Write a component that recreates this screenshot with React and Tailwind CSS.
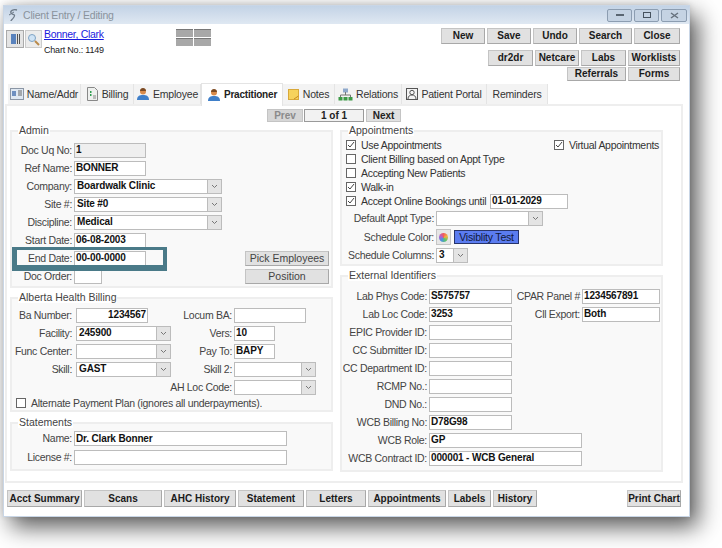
import { Fragment } from 'react';

const btn = 'flex items-center justify-center border border-[#c4c4c4] border-b-[#a8a8a8] border-r-[#a8a8a8] bg-[#e1e1e1] font-bold text-[#1a1a1a] text-[10px] leading-none whitespace-nowrap';

function Btn({ w, h = 'h-[16px]', children }) {
  return <div className={`${btn} ${w} ${h}`}>{children}</div>;
}

function Input({ w, value, right, gray }) {
  return (
    <div
      className={`${w} h-[15px] shrink-0 border border-[#bcbcbc] flex items-center px-[1px] font-bold text-[10px] tracking-[-0.15px] leading-none text-[#111] whitespace-nowrap overflow-hidden ${gray ? 'bg-[#efefef]' : 'bg-white'} ${right ? 'justify-end' : ''}`}
    >
      {value}
    </div>
  );
}

function Combo({ w, value }) {
  return (
    <div className={`${w} h-[15px] shrink-0 border border-[#bcbcbc] bg-white flex items-center font-bold text-[10px] tracking-[-0.15px] leading-none text-[#111]`}>
      <span className="flex-1 pl-[2px] whitespace-nowrap overflow-hidden">{value}</span>
      <span className="w-[14px] h-full bg-[#e4e4e4] border-l border-[#bcbcbc] flex items-center justify-center">
        <svg width="7" height="5" viewBox="0 0 7 5" fill="none">
          <path d="M1 1l2.500 2.500L6 1" stroke="#777" strokeWidth="1" />
        </svg>
      </span>
    </div>
  );
}

function Label({ w, children }) {
  return <span className={`${w} shrink-0 text-right text-[#444] text-[10.500px] tracking-[-0.3px] leading-none whitespace-nowrap`}>{children}</span>;
}

function Box({ title, className, children }) {
  return (
    <div className={`relative border-2 border-[#eeeeee] bg-[#f9f9f9] ${className}`}>
      <span className="absolute left-[6px] top-[-8px] bg-white px-[1px] text-[10.500px] leading-[12px] text-[#444]">{title}</span>
      {children}
    </div>
  );
}

function Check({ checked }) {
  return (
    <span className="w-[10px] h-[10px] shrink-0 border border-[#666] bg-white flex items-center justify-center">
      {checked && (
        <svg width="8" height="8" viewBox="0 0 8 8" fill="none">
          <path d="M1 4l2 2 4-5" stroke="#444" strokeWidth="1" />
        </svg>
      )}
    </span>
  );
}

function PersonIcon() {
  return (
    <svg width="14" height="14" viewBox="0 0 14 14">
      <path d="M1 13c0-4 2.500-5 6-5s6 1 6 5z" fill="#3f7fc9" />
      <circle cx="7" cy="4.500" r="3" fill="#d98b4a" />
      <path d="M4 4c0-2 1.500-3 3-3s3 1 3 3z" fill="#7a4a24" />
    </svg>
  );
}

const tabs = [
  {
    label: 'Name/Addr',
    w: 'w-[73px]',
    icon: (
      <svg width="14" height="12" viewBox="0 0 14 12">
        <rect x="0.500" y="0.500" width="13" height="11" fill="#dfe8f2" stroke="#8b96a5" />
        <rect x="2" y="3" width="4" height="5" fill="#6d8fc0" />
        <path d="M8 3h4M8 5h4M8 7h4" stroke="#666" />
      </svg>
    ),
  },
  {
    label: 'Billing',
    w: 'w-[53px]',
    icon: (
      <svg width="13" height="14" viewBox="0 0 13 14">
        <path d="M1.500.5h7l3 3v10h-10z" fill="#eef0ee" stroke="#888" />
        <path d="M4 5h1.500M4 8h1.500" stroke="#2e9e4f" strokeWidth="2" />
        <path d="M7 9h3M7 11h3" stroke="#888" />
      </svg>
    ),
  },
  { label: 'Employee', w: 'w-[67px]', icon: <PersonIcon /> },
  { label: 'Practitioner', w: 'w-[82px]', icon: <PersonIcon />, active: true },
  {
    label: 'Notes',
    w: 'w-[52px]',
    icon: (
      <svg width="12" height="12" viewBox="0 0 12 12">
        <rect x="0.500" y="1.500" width="10" height="10" fill="#f6d25c" stroke="#d9a93a" />
        <path d="M6 11l4.500-3" stroke="#c98a20" />
      </svg>
    ),
  },
  {
    label: 'Relations',
    w: 'w-[67px]',
    icon: (
      <svg width="15" height="13" viewBox="0 0 15 13">
        <rect x="5" y="0.500" width="5" height="4" fill="#8fa9cc" />
        <path d="M7.500 4v3M2.500 9V7h10v2" stroke="#777" fill="none" />
        <rect x="0.500" y="9" width="4" height="3.500" fill="#3d9a47" />
        <rect x="5.500" y="9" width="4" height="3.500" fill="#3d9a47" />
        <rect x="10.500" y="9" width="4" height="3.500" fill="#3d9a47" />
      </svg>
    ),
  },
  {
    label: 'Patient Portal',
    w: 'w-[85px]',
    icon: (
      <svg width="12" height="12" viewBox="0 0 12 12" fill="none" stroke="#555">
        <rect x="0.500" y="0.500" width="11" height="11" />
        <circle cx="6" cy="4.500" r="2.200" />
        <path d="M2 11c0-3 2-4 4-4s4 1 4 4" />
      </svg>
    ),
  },
  { label: 'Reminders', w: 'w-[61px]' },
];

const adminRows = [
  ['Doc Uq No:', <Input key="a" w="w-[72px]" value="1" gray />],
  ['Ref Name:', <Input key="a" w="w-[72px]" value="BONNER" />],
  ['Company:', <Combo key="a" w="w-[148px]" value="Boardwalk Clinic" />],
  ['Site #:', <Combo key="a" w="w-[148px]" value="Site #0" />],
  ['Discipline:', <Combo key="a" w="w-[148px]" value="Medical" />],
  ['Start Date:', <Input key="a" w="w-[72px]" value="06-08-2003" />],
];

const externalRows = [
  ['Lab Phys Code:', 'S575757', 'w-[83px]', 'CPAR Panel #', '1234567891'],
  ['Lab Loc Code:', '3253', 'w-[83px]', 'Cll Export:', 'Both'],
  ['EPIC Provider ID:', '', 'w-[83px]'],
  ['CC Submitter ID:', '', 'w-[83px]'],
  ['CC Department ID:', '', 'w-[83px]'],
  ['RCMP No.:', '', 'w-[83px]'],
  ['DND No.:', '', 'w-[83px]'],
  ['WCB Billing No:', 'D78G98', 'w-[83px]'],
  ['WCB Role:', 'GP', 'w-[153px]'],
  ['WCB Contract ID:', '000001 - WCB General', 'w-[153px]'],
];

const bottomButtons = [
  ['Acct Summary', 'w-[75px]'],
  ['Scans', 'w-[78px]'],
  ['AHC History', 'w-[72px]'],
  ['Statement', 'w-[66px]'],
  ['Letters', 'w-[60px]'],
  ['Appointments', 'w-[78px]'],
  ['Labels', 'w-[43px]'],
  ['History', 'w-[44px]'],
];

function AdminBox() {
  return (
    <Box title="Admin" className="h-[158px] pt-[9px]">
      {adminRows.map(([label, field]) => (
        <div key={label} className="flex items-center gap-[2px] h-[18px]">
          <Label w="w-[60px]">{label}</Label>
          {field}
        </div>
      ))}
      <div className="flex items-center gap-[2px] h-[18px]">
        <Label w="w-[60px]">End Date:</Label>
        <Input w="w-[72px]" value="00-00-0000" />
        <div className="ml-auto mr-[2px]">
          <Btn w="w-[84px]" h="h-[15px]"><span className="font-normal text-[10.500px] text-[#444]">Pick Employees</span></Btn>
        </div>
      </div>
      <div className="flex items-center gap-[2px] h-[18px]">
        <Label w="w-[60px]">Doc Order:</Label>
        <Input w="w-[28px]" value="" />
        <div className="ml-auto mr-[2px]">
          <Btn w="w-[84px]" h="h-[15px]"><span className="font-normal text-[10.500px] text-[#444]">Position</span></Btn>
        </div>
      </div>
      <div className="absolute left-[0px] top-[115px] w-[155px] h-[24px] border-[#4a7a88] border-t-[3px] border-l-[5px] border-r-[4px] border-b-[6px]" />
    </Box>
  );
}

function BillingBox() {
  return (
    <Box title="Alberta Health Billing" className="h-[115px] pt-[7px]">
      <div className="flex items-center h-[18px]">
        <div className="w-[158px] shrink-0 flex items-center gap-[4px]">
          <Label w="w-[60px]">Ba Number:</Label>
          <Input w="w-[72px]" value="1234567" right />
        </div>
        <Label w="w-[62px]">Locum BA:</Label>
        <span className="w-[2px]" />
        <Input w="w-[72px]" value="" />
      </div>
      <div className="flex items-center h-[18px]">
        <div className="w-[158px] shrink-0 flex items-center gap-[4px]">
          <Label w="w-[60px]">Facility:</Label>
          <Combo w="w-[95px]" value="245900" />
        </div>
        <Label w="w-[62px]">Vers:</Label>
        <span className="w-[2px]" />
        <Input w="w-[41px]" value="10" />
      </div>
      <div className="flex items-center h-[18px]">
        <div className="w-[158px] shrink-0 flex items-center gap-[4px]">
          <Label w="w-[60px]">Func Center:</Label>
          <Combo w="w-[95px]" value="" />
        </div>
        <Label w="w-[62px]">Pay To:</Label>
        <span className="w-[2px]" />
        <Input w="w-[41px]" value="BAPY" />
      </div>
      <div className="flex items-center h-[18px]">
        <div className="w-[158px] shrink-0 flex items-center gap-[4px]">
          <Label w="w-[60px]">Skill:</Label>
          <Combo w="w-[95px]" value="GAST" />
        </div>
        <Label w="w-[62px]">Skill 2:</Label>
        <span className="w-[2px]" />
        <Combo w="w-[82px]" value="" />
      </div>
      <div className="flex items-center h-[18px]">
        <div className="w-[158px] shrink-0" />
        <Label w="w-[62px]">AH Loc Code:</Label>
        <span className="w-[2px]" />
        <Combo w="w-[82px]" value="" />
      </div>
      <div className="flex items-center h-[14px] pl-[4px] gap-[5px] text-[10.500px] tracking-[-0.3px] leading-none text-[#444]">
        <Check />
        <span>Alternate Payment Plan (ignores all underpayments).</span>
      </div>
    </Box>
  );
}

function StatementsBox() {
  return (
    <Box title="Statements" className="h-[49px] pt-[5px]">
      <div className="flex items-center gap-[2px] h-[19px]">
        <Label w="w-[60px]">Name:</Label>
        <Input w="w-[213px]" value="Dr. Clark Bonner" />
      </div>
      <div className="flex items-center gap-[2px] h-[19px]">
        <Label w="w-[60px]">License #:</Label>
        <Input w="w-[213px]" value="" />
      </div>
    </Box>
  );
}

function AppointmentsBox() {
  const row = 'flex items-center h-[14px] pl-[4px] gap-[5px] text-[10.500px] tracking-[-0.3px] leading-none text-[#333]';
  return (
    <Box title="Appointments" className="h-[136px] pt-[6px]">
      <div className={row}>
        <Check checked />
        <span>Use Appointments</span>
        <span className="ml-auto mr-[2px] flex items-center gap-[5px]">
          <Check checked />
          <span>Virtual Appointments</span>
        </span>
      </div>
      {['Client Billing based on Appt Type', 'Accepting New Patients', 'Walk-in'].map((label, i) => (
        <div key={label} className={row}>
          <Check checked={i === 2} />
          <span>{label}</span>
        </div>
      ))}
      <div className={row}>
        <Check checked />
        <span className="w-[124px] shrink-0 whitespace-nowrap">Accept Online Bookings until</span>
        <Input w="w-[78px]" value="01-01-2029" />
      </div>
      <div className="flex items-center gap-[2px] h-[19px] mt-[1px]">
        <Label w="w-[92px]">Default Appt Type:</Label>
        <Combo w="w-[107px]" value="" />
      </div>
      <div className="flex items-center gap-[2px] h-[18px]">
        <Label w="w-[92px]">Schedule Color:</Label>
        <span className="w-[15px] h-[16px] bg-[#e6e6e6] border border-[#c4c4c4] flex items-center justify-center">
          <span className="w-[9px] h-[9px] rounded-full bg-[conic-gradient(#f25c5c,#f2b33c,#5cc46a,#4a90e2,#b05fd0,#f25c5c)]" />
        </span>
        <span className="ml-[1px] w-[65px] h-[14px] bg-[#5b7cf0] border border-[#27346b] flex items-center justify-center text-[10.500px] tracking-[-0.2px] leading-none text-[#10183a]">Visiblity Test</span>
      </div>
      <div className="flex items-center gap-[2px] h-[18px]">
        <Label w="w-[92px]">Schedule Columns:</Label>
        <Combo w="w-[32px]" value="3" />
      </div>
    </Box>
  );
}

function ExternalBox() {
  return (
    <Box title="External Identifiers" className="h-[197px] pt-[10px]">
      {externalRows.map(([label, value, w, label2, value2]) => (
        <div key={label} className="flex items-center gap-[2px] h-[18px]">
          <Label w="w-[85px]">{label}</Label>
          <Input w={w} value={value} />
          {label2 && (
            <Fragment>
              <Label w="w-[66px]">{label2}</Label>
              <Input w="w-[78px]" value={value2} />
            </Fragment>
          )}
        </div>
      ))}
    </Box>
  );
}

export default function App() {
  return (
    <div className="w-[722px] h-[548px] overflow-hidden bg-white pl-[3px] pt-[5px] font-['Liberation_Sans',Arial,sans-serif]">
      <div className="w-[687px] h-[512px] border border-[#c9d6e6] bg-white flex flex-col shadow-[8px_10px_22px_rgba(0,0,0,0.65),0_-1px_6px_rgba(0,0,0,0.12)]">
        {/* title bar */}
        <div className="h-[18px] shrink-0 bg-gradient-to-b from-[#c3d3e6] to-[#dfe8f2] flex items-center pl-[3px] pr-[2px]">
          <svg width="12" height="14" viewBox="0 0 12 14" fill="none" stroke="#6d7a88">
            <path d="M10 2C6 1 3 3 4 5s5 1 3 4-3 3-3 4" strokeWidth="1.300" />
            <path d="M2 7l5-3" />
          </svg>
          <span className="ml-[4px] text-[10.500px] tracking-[-0.2px] leading-none text-[#8a939c]">Client Entry / Editing</span>
          <div className="ml-auto flex gap-[2px]">
            <span className="w-[25px] h-[13px] border border-[#8c9db1] bg-[#c5d3e3] rounded-[2px] flex items-center justify-center">
              <span className="w-[8px] h-[2px] bg-[#5a6672]" />
            </span>
            <span className="w-[25px] h-[13px] border border-[#8c9db1] bg-[#c5d3e3] rounded-[2px] flex items-center justify-center">
              <span className="w-[8px] h-[6px] border border-[#46525e]" />
            </span>
            <span className="w-[26px] h-[13px] border border-[#8c9db1] bg-[#c5d3e3] rounded-[2px] flex items-center justify-center">
              <svg width="9" height="7" viewBox="0 0 9 7" stroke="#66717d" strokeWidth="1.500">
                <path d="M1 1l7 5M8 1L1 6" />
              </svg>
            </span>
          </div>
        </div>

        {/* header */}
        <div className="h-[60px] shrink-0 flex pl-[1px]">
          <div className="flex gap-[1px] pt-[6px] pl-[1px] w-[39px] shrink-0">
            <span className="w-[18px] h-[18px] border border-[#aaa] bg-[#e4e4e4] flex items-center justify-center gap-[1px]">
              <span className="w-[5px] h-[10px] bg-[#5a83bd]" />
              <span className="w-[3px] h-[10px] border-x border-[#555]" />
            </span>
            <span className="w-[17px] h-[18px] border border-[#ccc] bg-[#ececec] flex items-center justify-center">
              <svg width="13" height="13" viewBox="0 0 13 13" fill="none">
                <circle cx="5" cy="5" r="3.500" fill="#cfe3f5" stroke="#7fa3c4" />
                <path d="M8 8l4 4" stroke="#b98a4a" strokeWidth="2" />
              </svg>
            </span>
          </div>
          <div className="pt-[4px] w-[132px] shrink-0">
            <div className="text-[10.500px] tracking-[-0.3px] leading-[13px] text-[#1a1ae0] underline">Bonner, Clark</div>
            <div className="mt-[3px] text-[9px] tracking-[-0.2px] leading-[12px] text-[#222]">Chart No.: 1149</div>
          </div>
          <div className="mt-[5px] grid grid-cols-[17px_17px] grid-rows-[8px_8px] gap-[1px] h-[17px]">
            <span className="bg-[#a8a8a8] border-t border-[#777]" />
            <span className="bg-[#a8a8a8] border-t border-[#777]" />
            <span className="bg-[#a8a8a8] border-t border-[#777]" />
            <span className="bg-[#a8a8a8] border-t border-[#777]" />
          </div>
          <div className="ml-auto mr-[9px] pt-[4px] flex flex-col items-end">
            <div className="flex gap-[2px]">
              <Btn w="w-[44px]">New</Btn>
              <Btn w="w-[44px]">Save</Btn>
              <Btn w="w-[44px]">Undo</Btn>
              <Btn w="w-[53px]">Search</Btn>
              <Btn w="w-[46px]">Close</Btn>
            </div>
            <div className="flex gap-[2px] mt-[6px]">
              <Btn w="w-[45px]">dr2dr</Btn>
              <Btn w="w-[44px]">Netcare</Btn>
              <Btn w="w-[45px]">Labs</Btn>
              <Btn w="w-[52px]">Worklists</Btn>
            </div>
            <div className="flex gap-[2px] mt-[1px]">
              <Btn w="w-[59px]" h="h-[14px]">Referrals</Btn>
              <Btn w="w-[52px]" h="h-[14px]">Forms</Btn>
            </div>
          </div>
        </div>

        {/* tabs */}
        <div className="h-[20px] shrink-0 flex items-end pl-[4px] relative z-10">
          {tabs.map((tab) => (
            <div
              key={tab.label}
              className={`${tab.w} flex items-center justify-center gap-[3px] leading-none border-r border-[#e4e4e4] ${
                tab.active
                  ? 'h-[23px] -mb-[2px] bg-white border-x border-t border-[#dcdcdc] font-bold text-[10px] tracking-[-0.2px] text-[#222]'
                  : 'h-[20px] bg-[#f3f3f3] text-[10.500px] tracking-[-0.2px] text-[#333]'
              }`}
            >
              {tab.icon}
              <span>{tab.label}</span>
            </div>
          ))}
        </div>

        {/* tab panel */}
        <div className="ml-[1px] w-[678px] h-[379px] shrink-0 border-2 border-[#eeeeee] bg-white flex flex-col">
          <div className="flex h-[23px] shrink-0 pt-[3px] pl-[260px]">
            <span className="w-[36px] h-[13px] bg-[#d6d6d6] border border-[#c4c4c4] flex items-center justify-center text-[10px] leading-none font-bold text-[#8a8a8a]">Prev</span>
            <span className="ml-[1px] w-[60px] h-[13px] bg-[#f2f2f2] border border-[#9a9a9a] flex items-center justify-center text-[10px] leading-none font-bold text-[#222]">1 of 1</span>
            <span className="ml-[2px] w-[35px] h-[13px] bg-[#e1e1e1] border border-[#c4c4c4] flex items-center justify-center text-[10px] leading-none font-bold text-[#222]">Next</span>
          </div>
          <div className="flex gap-[7px] pl-[3px] pt-[1px]">
            <div className="w-[323px] shrink-0 flex flex-col gap-[9px]">
              <AdminBox />
              <BillingBox />
              <div className="mt-[1px]">
                <StatementsBox />
              </div>
            </div>
            <div className="w-[323px] shrink-0 flex flex-col gap-[9px]">
              <AppointmentsBox />
              <ExternalBox />
            </div>
          </div>
        </div>

        {/* bottom buttons */}
        <div className="flex pl-[3px] pt-[7px] gap-[2px]">
          {bottomButtons.map(([label, w]) => (
            <Btn key={label} w={w} h="h-[17px]">{label}</Btn>
          ))}
          <div className="ml-auto mr-[8px]">
            <Btn w="w-[54px]" h="h-[17px]">Print Chart</Btn>
          </div>
        </div>
      </div>
    </div>
  );
}
